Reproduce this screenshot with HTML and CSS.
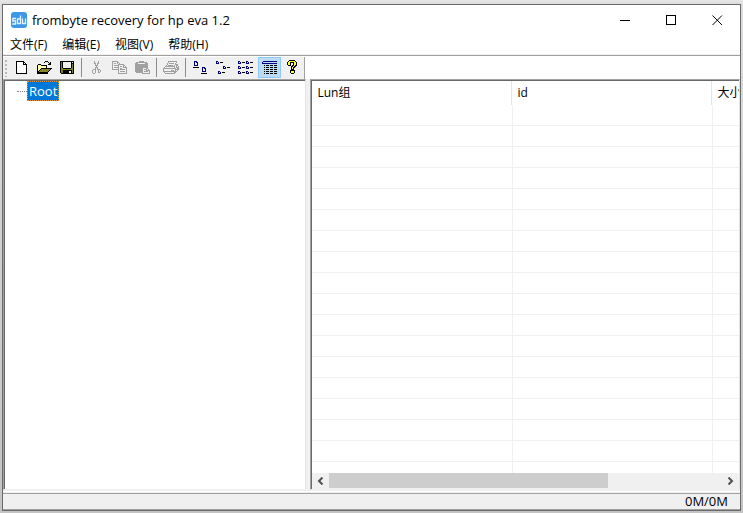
FILE: index.html
```html
<!DOCTYPE html>
<html lang="zh-CN">
<head>
<meta charset="utf-8">
<title>frombyte recovery for hp eva 1.2</title>
<link rel="stylesheet" href="styles.css">
</head>
<body>
<div class="window">
  <header class="titlebar">
    <svg class="app-icon" viewBox="0 0 16 16" aria-hidden="true">
      <rect width="16" height="16" rx="3" fill="#3f97e8"/>
      <path d="M5 6.500H1.800v2.500h2.700v3H1.200M9.500 3.500v8.500M9.500 7H6.500v4.500h3M11.500 6.500v5h3v-5" fill="none" stroke="#e4f2ff" stroke-width="1.300"/>
    </svg>
    <h1 class="title">frombyte recovery for hp eva 1.2</h1>
    <button class="caption-button" type="button" aria-label="最小化"><svg viewBox="0 0 11 11"><path d="M0 5.500h10"/></svg></button>
    <button class="caption-button" type="button" aria-label="最大化"><svg viewBox="0 0 11 11"><path d="M.5.5h9v9h-9z"/></svg></button>
    <button class="caption-button" type="button" aria-label="关闭"><svg class="smooth" viewBox="0 0 11 11"><path d="M.5.5l9.500 9.500M10 .5L.5 10"/></svg></button>
  </header>
  <nav class="menubar">
    <button type="button">文件(F)</button>
    <button type="button">编辑(E)</button>
    <button type="button">视图(V)</button>
    <button type="button">帮助(H)</button>
  </nav>
  <div class="toolbar-row">
    <div class="toolbar" role="toolbar">
      <span class="grip"></span>
      <button class="tool" type="button" aria-label="新建"><svg viewBox="0 0 17 15"><path fill="#fff" d="M3 1h8l3 3v10H3z"/><path stroke="#000" d="M3 1.500h8M3.500 1v13M3 13.500h11M13.500 4v10M10.500 1v4M10 4.500h4M11 2.500h1M12 3.500h1"/></svg></button>
      <button class="tool" type="button" aria-label="打开"><svg viewBox="0 0 17 15"><path fill="#ffffa8" d="M2 5h3v1h5v3H4v1H3v1H2z"/><path fill="#85852b" d="M5 9h10v1h-1v1h-1v1h-1v1H2v-1h1v-1h1v-1h1z"/><path stroke="#000" d="M9 1.500h3M8 2.500h1M12 2.500h1M14 2.500h1M13 3.500h2M2 4.500h3M12 4.500h3M1 5.500h1M5 5.500h6M1.500 5v8M10.500 5v4M5 8.500h11M4 9.500h1M14 9.500h1M3 10.500h1M13 10.500h1M2 11.500h1M12 11.500h1M1 12.500h11M1 13.500h11"/></svg></button>
      <button class="tool" type="button" aria-label="保存"><svg viewBox="0 0 17 15"><path fill="#000" d="M1 1h14v13H2l-1-1z"/><path fill="#808020" d="M2 2h1v6h1v1h8V8h1V4h1v9H2z"/><path fill="#f0f0f0" d="M4 2h8v6H4zM13 2h1v1h-1z"/><path fill="#000" d="M4 10h9v4H4z"/><path fill="#f0f0f0" d="M10 11h2v2h-2z"/></svg></button>
      <span class="separator"></span>
      <button class="tool" type="button" aria-label="剪切" disabled><svg viewBox="0 0 17 15"><path stroke="#a0a0a0" d="M6.500 1v3M10.500 1v3M7.500 3v3M9.500 3v3M8.500 5v3M7.500 7v2M9 7.500h1M9.500 7v3M10 9.500h2M6 9.500h2M7.500 9v4M5 9.500h2M4.500 10v3M5 13.500h2M10.500 9v4M10 12.500h2M12.500 10v2"/></svg></button>
      <button class="tool" type="button" aria-label="复制" disabled><svg viewBox="0 0 17 15"><path stroke="#a0a0a0" d="M1 1.500h6M1.500 1v9M1 9.500h6M6.500 1v3M7 2.500h1M8 3.500h1M3 3.500h2M3 5.500h4M3 7.500h4M7 4.500h6M7.500 4v9M7 13.500h9M12.500 4v4M13 5.500h1M14 6.500h1M12 7.500h4M15.500 7v6M9 6.500h2M9 8.500h2M9 9.500h5M9 11.500h5"/></svg></button>
      <button class="tool" type="button" aria-label="粘贴" disabled><svg viewBox="0 0 17 15"><path fill="#a0a0a0" d="M2 2h3V1h5v1h3v1h1v5H8v5H2l-1-1V3h1z"/><path fill="#f0f0f0" d="M4 3h7v1H4zM9 8h4l2 2v4H9z"/><path stroke="#a0a0a0" d="M8 7.500h5M8.500 7v7M8 13.500h8M12.500 7v4M12 10.500h4M13 8.500h1M14 9.500h1M15.500 10v4M10 9.500h2M10 11.500h4"/></svg></button>
      <span class="separator"></span>
      <button class="tool" type="button" aria-label="打印" disabled><svg viewBox="0 0 17 15"><path stroke="#a0a0a0" d="M5 1.500h9M5 2.500h1M13 2.500h1M4 3.500h1M6 3.500h5M12 3.500h1M4 4.500h1M12 4.500h3M3 5.500h1M5 5.500h5M11 5.500h1M13 5.500h2M2 6.500h10M13 6.500h1M15 6.500h1M1 7.500h1M11 7.500h1M13 7.500h3M0 8.500h13M14 8.500h2M0 9.500h1M12 9.500h4M0 10.500h1M8 10.500h3M12 10.500h1M14 10.500h1M0 11.500h14M1 12.500h1M11 12.500h2M2 13.500h10"/></svg></button>
      <span class="separator"></span>
      <button class="tool" type="button" aria-label="大图标"><svg viewBox="0 0 17 15"><path stroke="#000080" d="M2 1.500h3M2.500 1v5M2 5.500h4M5.500 2v4M4 2.500h2M10 7.500h3M10.500 7v5M10 11.500h4M13.500 8v4M12 8.500h2"/><path stroke="#000" d="M1 7.500h6M9 13.500h6"/></svg></button>
      <button class="tool" type="button" aria-label="小图标"><svg viewBox="0 0 17 15"><path stroke="#000080" d="M1 1.500h2M1.500 1v3M1 3.500h3M3.500 2v2M8 6.500h2M8.500 6v3M8 8.500h3M10.500 7v2M3 11.500h2M3.500 11v3M3 13.500h3M5.500 12v2"/><path stroke="#000" d="M5 2.500h3M12 7.500h3M7 12.500h3"/></svg></button>
      <button class="tool" type="button" aria-label="列表"><svg viewBox="0 0 17 15"><path stroke="#000080" d="M0 1.500h2M.5 1v3M0 3.500h3M2.500 2v2M8 1.500h2M8.500 1v3M8 3.500h3M10.500 2v2M0 6.500h2M.5 6v3M0 8.500h3M2.500 7v2M8 6.500h2M8.500 6v3M8 8.500h3M10.500 7v2M0 11.500h2M.5 11v3M0 13.500h3M2.500 12v2M8 11.500h2M8.500 11v3M8 13.500h3M10.500 12v2"/><path stroke="#000" d="M4 2.500h3M12 2.500h3M4 7.500h3M12 7.500h3M4 12.500h3M12 12.500h3"/></svg></button>
      <button class="tool active" type="button" aria-label="详细资料" aria-pressed="true"><svg viewBox="0 0 17 15"><path stroke="#000080" d="M2 1.500h14M1 3.500h15M1 2.500h1"/><path stroke="#000" d="M3 5.500h1M5 5.500h3M9 5.500h3M13 5.500h3M3 7.500h1M5 7.500h3M9 7.500h3M13 7.500h3M3 9.500h1M5 9.500h3M9 9.500h3M13 9.500h3M3 11.500h1M5 11.500h3M9 11.500h3M13 11.500h3M3 13.500h1M5 13.500h3M9 13.500h3M13 13.500h3"/></svg></button>
      <button class="tool" type="button" aria-label="帮助"><svg viewBox="0 0 17 15"><path fill="#000" d="M5 0h6v1h1v1h1v4h-1v1h-1v1h-1v2h1v3h-1v1H7v-1H6v-3h1V6h1V5h1V3H7v3H4V5H3V2h1V1h1z"/><path fill="#ffff30" d="M5 1h6v1h1v3h-1v1h-1v1H9v2H8V7h1V6h1V2H6v3H4V2h1zM7 11h3v2H7z"/></svg></button>
    </div>
  </div>
  <main class="panes">
    <section class="pane tree-pane">
      <ul class="tree"><li><a class="node" href="#">Root</a></li></ul>
    </section>
    <section class="pane list-pane">
      <div class="list-view">
        <table class="list">
          <colgroup><col class="col"><col class="col"><col class="col"></colgroup>
          <thead><tr><th>Lun组</th><th>id</th><th>大小</th></tr></thead>
          <tbody>
            <tr><td></td><td></td><td></td></tr>
            <tr><td></td><td></td><td></td></tr>
            <tr><td></td><td></td><td></td></tr>
            <tr><td></td><td></td><td></td></tr>
            <tr><td></td><td></td><td></td></tr>
            <tr><td></td><td></td><td></td></tr>
            <tr><td></td><td></td><td></td></tr>
            <tr><td></td><td></td><td></td></tr>
            <tr><td></td><td></td><td></td></tr>
            <tr><td></td><td></td><td></td></tr>
            <tr><td></td><td></td><td></td></tr>
            <tr><td></td><td></td><td></td></tr>
            <tr><td></td><td></td><td></td></tr>
            <tr><td></td><td></td><td></td></tr>
            <tr><td></td><td></td><td></td></tr>
            <tr><td></td><td></td><td></td></tr>
            <tr><td></td><td></td><td></td></tr>
            <tr><td></td><td></td><td></td></tr>
          </tbody>
        </table>
      </div>
      <div class="scrollbar">
        <button type="button" aria-label="向左滚动"><svg viewBox="0 0 7 8"><path d="M5.500 0.500L2 4l3.500 3.500"/></svg></button>
        <div class="track"><div class="thumb"></div></div>
        <button type="button" aria-label="向右滚动"><svg viewBox="0 0 7 8"><path d="M1.500 0.500L5 4 1.500 7.500"/></svg></button>
      </div>
    </section>
  </main>
  <footer class="statusbar">0M/0M</footer>
</div>
</body>
</html>
```
FILE: styles.css
```css
* {
  box-sizing: border-box;
}

body {
  margin: 0;
  height: 100vh;
  padding: 4px 2px 2px;
  background: linear-gradient(#e8e8e8, #dcdcdc 4px, #c4c4c4);
  color: #000;
  font: 12px/16px "Open Sans", "Noto Sans CJK SC", sans-serif;
}

button {
  margin: 0;
  padding: 0;
  border: 0;
  background: transparent;
  color: inherit;
  font: inherit;
}

svg {
  display: block;
  fill: none;
  shape-rendering: crispEdges;
}

.window {
  display: flex;
  flex-direction: column;
  height: 100%;
  border: 1px solid #6b6b6b;
  background: #fff;
}

.titlebar {
  display: flex;
  align-items: center;
  height: 30px;
  padding-left: 8px;
}

.app-icon {
  width: 16px;
  height: 16px;
  shape-rendering: auto;
}

.title {
  flex: 1;
  margin: 0 0 0 5px;
  font-size: 13px;
  font-weight: 400;
}

.caption-button {
  display: grid;
  place-items: center;
  width: 46px;
  height: 30px;
}

.caption-button svg {
  width: 11px;
  height: 11px;
  stroke: #000;
}

.caption-button .smooth {
  shape-rendering: auto;
}

.menubar {
  display: flex;
  gap: 15px;
  height: 20px;
  padding-left: 7px;
  border-bottom: 1px solid #f0f0f0;
}

.menubar button {
  height: 20px;
}

.toolbar-row {
  border-top: 1px solid #a0a0a0;
  padding-top: 1px;
}

.toolbar {
  display: flex;
  width: 302px;
  height: 22px;
  background: #f0f0f0;
  border-right: 1px solid #a0a0a0;
}

.grip {
  width: 7px;
  margin: 2px 0;
  background: radial-gradient(circle at 3px 2px, #b8b8b8 1px, transparent 1px) 0 0 / 7px 4px;
}

.tool {
  display: grid;
  place-items: center start;
  width: 23px;
  height: 21px;
  padding-left: 3px;
}

.tool svg {
  width: 17px;
  height: 15px;
}

.tool.active {
  background: #bcdcf4;
  box-shadow: inset 0 0 0 1px #90c8f6;
}

.separator {
  width: 6px;
  height: 19px;
  margin-top: 1px;
  border-left: 2px solid transparent;
  background: linear-gradient(#8c8c8c, #8c8c8c) 0 0 / 1px 100% no-repeat;
}

.panes {
  display: grid;
  grid-template-columns: minmax(0, 303fr) minmax(0, 429fr);
  gap: 4px;
  flex: 1;
  min-height: 0;
  background: #f0f0f0;
}

.pane {
  min-width: 0;
  min-height: 0;
  padding: 1px 0 0 1px;
  border: 1px solid #e3e3e3;
  border-top-color: #a0a0a0;
  border-left-color: #a0a0a0;
  border-bottom-color: #f0f0f0;
  background: #fff;
  box-shadow: inset 1px 1px #696969;
}

.tree {
  margin: 0;
  padding: 0 0 0 12px;
  list-style: none;
}

.tree li {
  display: flex;
  align-items: center;
}

.tree li::before {
  content: "";
  width: 10px;
  border-top: 1px dotted #808080;
}

.node {
  height: 20px;
  padding: 0 1px;
  border: 1px dotted #e0933c;
  background: #0078d7;
  color: #fff;
  font-size: 13px;
  line-height: 18px;
  text-decoration: none;
}

.list-pane {
  display: flex;
  flex-direction: column;
}

.list-view {
  flex: 1;
  min-height: 0;
  overflow: hidden;
}

.list {
  width: 600px;
  table-layout: fixed;
  border-collapse: separate;
  border-spacing: 0;
}

.col {
  width: 200px;
}

.list th {
  height: 24px;
  padding: 0 5px;
  border-right: 1px solid #e5e5e5;
  font-weight: 400;
  text-align: left;
}

.list td {
  height: 21px;
  padding: 0;
  border-bottom: 1px solid #f0f0f0;
}

.list td + td {
  border-left: 1px solid #f0f0f0;
}

.scrollbar {
  display: flex;
  height: 16px;
  background: #f0f0f0;
}

.scrollbar button {
  display: grid;
  place-items: center;
  width: 17px;
}

.scrollbar svg {
  width: 7px;
  height: 8px;
  stroke: #505050;
  stroke-width: 2;
  shape-rendering: auto;
}

.track {
  flex: 1;
}

.thumb {
  width: 71%;
  height: 15px;
  background: #cdcdcd;
}

.statusbar {
  height: 20px;
  padding-right: 12px;
  border-bottom: 1px solid #a0a0a0;
  background: linear-gradient(#f0f0f0 1px, #fff 1px, #fff 2px, #f0f0f0 2px, #f0f0f0 3px, #a0a0a0 3px, #a0a0a0 4px, #f0f0f0 4px);
  font-size: 13px;
  line-height: 22px;
  text-align: right;
}
```
